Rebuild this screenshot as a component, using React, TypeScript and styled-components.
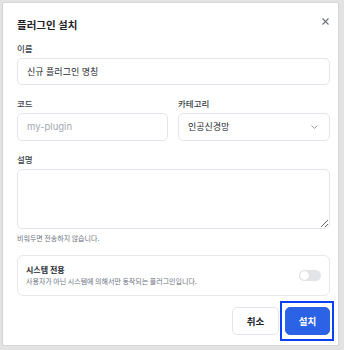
import React from "react";
import styled, { createGlobalStyle } from "styled-components";

const Global = createGlobalStyle`
  html, body { margin: 0; padding: 0; background: #e3e3e3; }
  body { font-family: Inter, "Noto Sans CJK KR", sans-serif; }
  * { box-sizing: border-box; }
`;

const Page = styled.div`
  padding: 2px 5px 4px 2px;
  width: 344px;
  height: 350px;
`;

const Dialog = styled.div`
  width: 337px;
  height: 344px;
  background: #fff;
  border: 1px solid #d6d6d6;
  border-radius: 2px;
  padding: 14px 8px 10px 14px;
  display: flex;
  flex-direction: column;
`;

const Header = styled.div`
  display: flex;
  justify-content: space-between;
  align-items: flex-start;
  height: 24px;
`;

const Title = styled.h2`
  margin: 0;
  font-size: 10.5px;
  line-height: 16px;
  font-weight: 700;
  color: #1f2329;
  font-family: "Noto Sans CJK KR", sans-serif;
`;

const Close = styled.button`
  border: 0;
  background: none;
  padding: 0;
  margin: -2px -1px 0 0;
  width: 12px;
  height: 12px;
  display: flex;
  align-items: center;
  justify-content: center;
  color: #6b7078;
  cursor: pointer;
`;

const Field = styled.div<{ $gap?: number }>`
  display: flex;
  flex-direction: column;
  gap: 4px;
  margin-top: ${(p) => p.$gap ?? 0}px;
  min-width: 0;
`;

const Label = styled.label`
  font-family: "Noto Sans CJK KR", sans-serif;
  font-size: 8.5px;
  line-height: 12px;
  font-weight: 500;
  color: #3a3f47;
`;

const inputBase = `
  width: 100%;
  height: 27.5px;
  border: 1px solid #e2e5eb;
  border-radius: 5px;
  background: #fff;
  padding: 0 9px;
  font-size: 9px;
  color: #24282e;
  font-family: Inter, "Noto Sans CJK KR", sans-serif;
  outline: none;
`;

const Input = styled.input`
  ${inputBase}
  &::placeholder { color: #a3a8b1; font-size: 9.5px; }
`;

const Row = styled.div`
  display: grid;
  grid-template-columns: 151px 152px;
  column-gap: 10px;
  margin-top: 12px;
`;

const SelectBox = styled.div`
  ${inputBase}
  display: flex;
  align-items: center;
  justify-content: space-between;
  padding-right: 11px;
  font-family: "Noto Sans CJK KR", sans-serif;
`;

const TextArea = styled.textarea`
  ${inputBase}
  height: 60.5px;
  padding: 7px 9px;
  resize: vertical;
`;

const Helper = styled.div`
  margin-top: 4px;
  font-family: "Noto Sans CJK KR", sans-serif;
  font-size: 7px;
  line-height: 10px;
  color: #6b7280;
`;

const Card = styled.div`
  margin-top: 12px;
  height: 43px;
  border: 1px solid #e6e8ec;
  border-radius: 6px;
  padding: 0 8px 0 8px;
  display: flex;
  align-items: center;
  justify-content: space-between;
`;

const CardText = styled.div`
  display: flex;
  flex-direction: column;
  font-family: "Noto Sans CJK KR", sans-serif;
`;

const CardTitle = styled.div`
  font-size: 8px;
  line-height: 12px;
  font-weight: 700;
  color: #23272e;
`;

const CardDesc = styled.div`
  font-size: 7px;
  line-height: 11px;
  color: #6b7280;
`;

const Toggle = styled.div`
  width: 22px;
  height: 11px;
  border-radius: 6px;
  background: #e3e4e7;
  padding: 1px;
  display: flex;
  align-items: center;
`;

const Knob = styled.div`
  width: 9px;
  height: 9px;
  border-radius: 50%;
  background: #fff;
  box-shadow: 0 0 1px rgba(0, 0, 0, 0.15);
`;

const Footer = styled.div`
  margin-top: 11px;
  display: flex;
  justify-content: flex-end;
  gap: 6px;
`;

const Button = styled.button<{ $primary?: boolean }>`
  position: relative;
  height: 28px;
  width: ${(p) => (p.$primary ? 45 : 47)}px;
  border-radius: 5px;
  border: 1px solid ${(p) => (p.$primary ? "#2c63e6" : "#e2e5eb")};
  background: ${(p) => (p.$primary ? "#2c63e6" : "#fff")};
  color: ${(p) => (p.$primary ? "#fff" : "#23272e")};
  font-family: "Noto Sans CJK KR", sans-serif;
  font-size: 9.5px;
  font-weight: 700;
  padding: 0;
  outline: none;
  ${(p) =>
    p.$primary
      ? `&::after {
          content: "";
          position: absolute;
          left: -6px; right: -5px; top: -7px; bottom: -7px;
          border: 2px solid #0b3ff5;
          pointer-events: none;
        }`
      : ""}
`;

export default function App() {
  return (
    <Page>
      <Global />
      <Dialog>
        <Header>
          <Title>플러그인 설치</Title>
          <Close aria-label="닫기">
            <svg width="7" height="7" viewBox="0 0 7 7">
              <path d="M0.5 0.5 L6.5 6.5 M6.5 0.5 L0.5 6.5" stroke="currentColor" strokeWidth="1.1" />
            </svg>
          </Close>
        </Header>
        <Field $gap={2}>
          <Label>이름</Label>
          <Input defaultValue="신규 플러그인 명칭" />
        </Field>
        <Row>
          <Field>
            <Label>코드</Label>
            <Input placeholder="my-plugin" />
          </Field>
          <Field>
            <Label>카테고리</Label>
            <SelectBox>
              <span>인공신경망</span>
              <svg width="7" height="4" viewBox="0 0 7 4">
                <path d="M0.5 0.5 L3.5 3.3 L6.5 0.5" fill="none" stroke="#8a9099" strokeWidth="0.9" />
              </svg>
            </SelectBox>
          </Field>
        </Row>
        <Field $gap={12}>
          <Label>설명</Label>
          <TextArea />
        </Field>
        <Helper>비워두면 전송하지 않습니다.</Helper>
        <Card>
          <CardText>
            <CardTitle>시스템 전용</CardTitle>
            <CardDesc>사용자가 아닌 시스템에 의해서만 동작되는 플러그인입니다.</CardDesc>
          </CardText>
          <Toggle>
            <Knob />
          </Toggle>
        </Card>
        <Footer>
          <Button>취소</Button>
          <Button $primary>설치</Button>
        </Footer>
      </Dialog>
    </Page>
  );
}
